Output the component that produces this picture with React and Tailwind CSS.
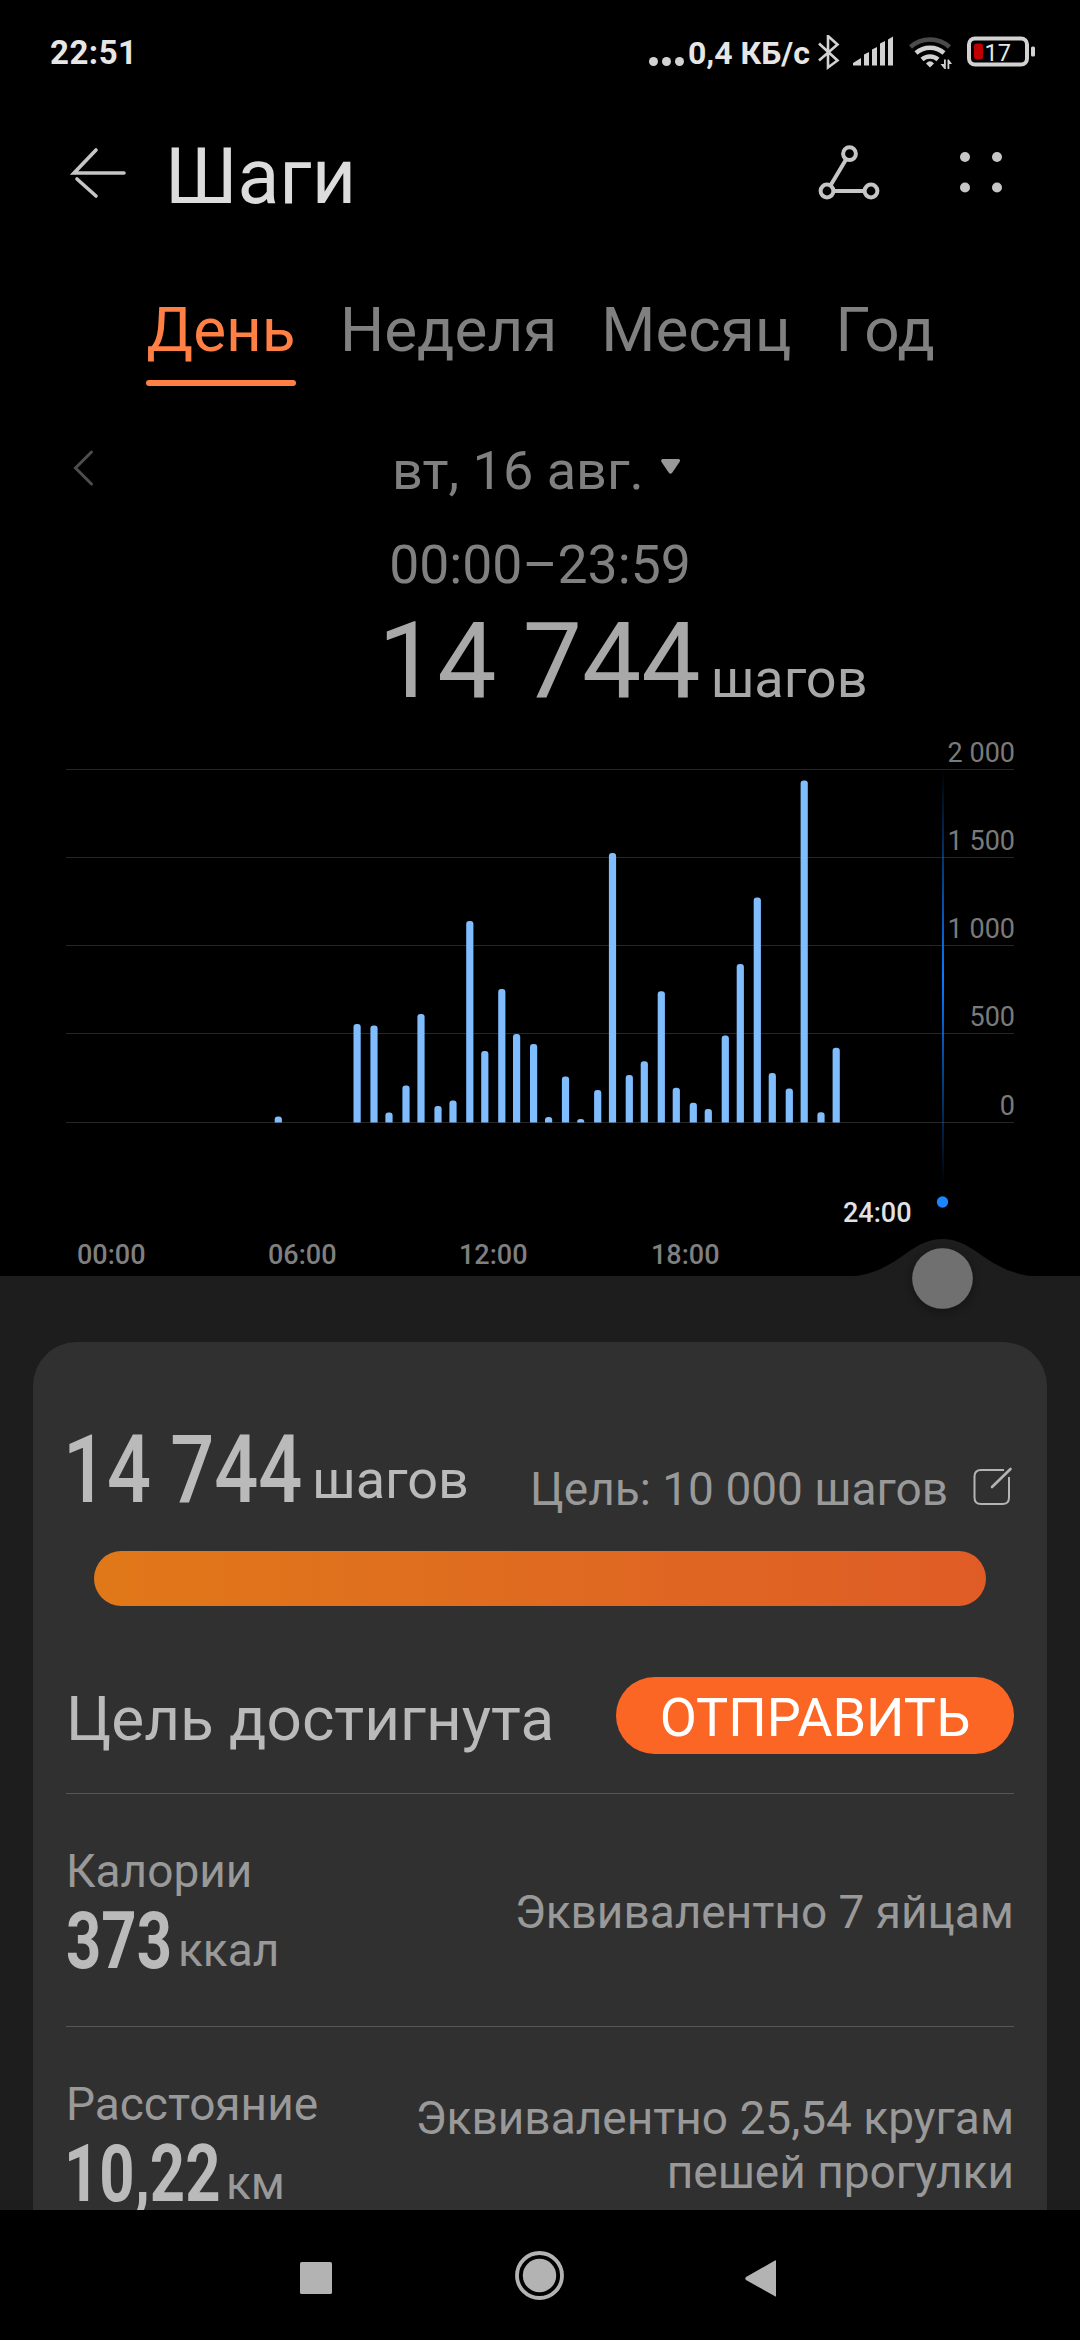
import { useState } from 'react'

const TABS = ['День', 'Неделя', 'Месяц', 'Год']

// x = bar center, y = bar top
const BARS = [
  [278.3, 1116.4], [357.1, 1024], [374, 1025.4], [389, 1112.5], [406, 1085.4], [421, 1014],
  [438, 1106], [453, 1100.4], [469.8, 921], [484.8, 1051], [501.8, 989], [516.6, 1034],
  [533.6, 1044], [548.6, 1117], [565.5, 1076.4], [580.7, 1119], [597.7, 1090], [612.5, 853],
  [629.3, 1075], [644.3, 1061.2], [661.3, 991.3], [676.3, 1087.7], [693.3, 1102.8], [708.3, 1109],
  [725.3, 1035.5], [740.3, 964], [757.3, 897.5], [772.3, 1073], [789.3, 1088.5], [804.2, 780.5],
  [821, 1112.2], [836.2, 1047.8],
]

const GRID = [
  { y: 769, label: '2 000' },
  { y: 857, label: '1 500' },
  { y: 945, label: '1 000' },
  { y: 1033, label: '500' },
  { y: 1122, label: '0' },
]

const HOURS = [
  { x: 77, label: '00:00' },
  { x: 268, label: '06:00' },
  { x: 459, label: '12:00' },
  { x: 651, label: '18:00' },
]

function StatusBar() {
  return (
    <div className="h-[105px] flex items-center justify-between pl-[50px] pr-[42px]">
      <span className="text-[33px] leading-[40px] tracking-[0.5px] font-bold text-[#e6e6e6]">22:51</span>
      <div className="flex items-center">
        <svg className="w-[40px] h-[36px]" viewBox="648 34 40 36" fill="#d2d2d2">
          <circle cx="653.5" cy="60.5" r="4.5" />
          <circle cx="666.5" cy="60.5" r="4.5" />
          <circle cx="679.5" cy="60.5" r="4.5" />
        </svg>
        <span className="w-[127px] text-[32px] leading-[40px] font-bold text-[#e6e6e6] whitespace-nowrap">
          0,4 КБ/с
        </span>
        {/* bluetooth */}
        <svg className="w-[32px] h-[36px]" viewBox="815 34.5 32 36" fill="none" stroke="#d2d2d2" strokeWidth="2.6">
          <path d="M819 43L837.5 60L828 67V35.5L837.5 44L819 60" />
        </svg>
        {/* signal */}
        <svg className="w-[55px] h-[36px]" viewBox="847 34.5 55 36" fill="#d2d2d2">
          <path d="M853 65V62.5L861 57.5V65ZM864 65V54L869 51.5V65ZM872 65V49L877 46.5V65ZM880 65V43L885 40.5V65ZM888 65V39L893 36V65Z" />
        </svg>
        {/* wifi */}
        <svg className="w-[60px] h-[36px]" viewBox="902 34.5 60 36" fill="none" strokeWidth="4.5">
          <path d="M910.5 46.5A29 29 0 0 1 949.5 46.5" stroke="#4a4a4a" />
          <path d="M916 52.5A21 21 0 0 1 944 52.5" stroke="#d2d2d2" />
          <path d="M922 59A12 12 0 0 1 938 59" stroke="#d2d2d2" />
          <path d="M926 63Q930 58.5 934 63L930 67Z" fill="#d2d2d2" stroke="none" />
          <path d="M944 59H945.8V68.5H944.5L940.5 63.5H944ZM947.5 68.5V59H948.8L952 63.5H949.3V68.5Z" fill="#d2d2d2" stroke="none" />
        </svg>
        <svg className="w-[76px] h-[36px]" viewBox="962 34.5 76 36">
          <rect x="969" y="38" width="58" height="26" rx="6" fill="none" stroke="#d2d2d2" strokeWidth="4" />
          <rect x="1031" y="46" width="4" height="10" rx="1.5" fill="#d2d2d2" />
          <rect x="974" y="43" width="9" height="16" rx="3" fill="#c00000" />
          <text x="984.5" y="60" fontSize="23.5" fill="#e6e6e6">17</text>
        </svg>
      </div>
    </div>
  )
}

function Header() {
  return (
    <div className="h-[144px] flex items-center pl-[66px]">
      <svg
        className="w-[66px] h-[72px]"
        viewBox="66 141 66 72"
        fill="none"
        stroke="#c6c6c6"
        strokeWidth="3.6"
        strokeLinecap="round"
      >
        <path d="M124 173H74L96 150M77 179L96 196" />
      </svg>
      <h1 className="ml-[33px] text-[77px] leading-[90px] text-[#dcdcdc]">Шаги</h1>
      <svg className="ml-auto w-[70px] h-[72px]" viewBox="815 141 70 72" fill="none" stroke="#c6c6c6" strokeWidth="4">
        <circle cx="849.5" cy="153.7" r="6.4" />
        <circle cx="827" cy="191" r="6.4" />
        <circle cx="871" cy="191" r="6.4" />
        <path d="M846 159.5L830.5 185.5M833.5 191H864.5" />
      </svg>
      <svg className="ml-[60px] mr-[65px] w-[70px] h-[72px]" viewBox="945 141 70 72" fill="#c6c6c6">
        <circle cx="965" cy="157" r="5" />
        <circle cx="997" cy="157" r="5" />
        <circle cx="965" cy="187.5" r="5" />
        <circle cx="997" cy="187.5" r="5" />
      </svg>
    </div>
  )
}

function Chart() {
  return (
    <svg className="relative z-10 block w-[1080px] h-[555px] overflow-visible" viewBox="0 721 1080 555">
      <defs>
        <linearGradient id="cursor" x1="0" y1="0" x2="0" y2="1">
          <stop offset="0" stopColor="#0a7aff" stopOpacity="0" />
          <stop offset="0.5" stopColor="#0a7aff" />
          <stop offset="1" stopColor="#0a7aff" stopOpacity="0" />
        </linearGradient>
        <filter id="knobShadow" x="-50%" y="-50%" width="200%" height="200%">
          <feDropShadow dx="0" dy="3" stdDeviation="6" floodColor="#000" floodOpacity="0.35" />
        </filter>
      </defs>

      {GRID.map((g) => (
        <g key={g.label}>
          <rect x="66" y={g.y} width="948" height="1" fill="#262626" />
          <text x="1015" y={g.y - 7.5} textAnchor="end" fontSize="27" fill="#7a7a7a">
            {g.label}
          </text>
        </g>
      ))}

      {BARS.map(([x, y]) => (
        <path
          key={x}
          d={`M${x - 3.6} 1122.5V${Math.min(y + 3, 1122)}q0 -3 3 -3h1.2q3 0 3 3V1122.5Z`}
          fill="#7fbdff"
        />
      ))}

      {HOURS.map((h) => (
        <text key={h.label} x={h.x} y="1264" fontSize="27" fontWeight="500" fill="#7f7f7f">
          {h.label}
        </text>
      ))}
      <text x="843" y="1222" fontSize="27" fontWeight="500" fill="#e2e2e2">
        24:00
      </text>

      <rect x="942" y="769" width="2" height="417" fill="url(#cursor)" />
      <circle cx="942.5" cy="1202" r="5.7" fill="#1c86ff" />

      {/* slider bump and knob */}
      <path d="M845 1277C898 1275 908 1239 942.5 1239S987 1275 1042 1277Z" fill="#1d1d1d" />
      <circle cx="942.5" cy="1278.5" r="30.3" fill="#707070" filter="url(#knobShadow)" />
    </svg>
  )
}

function Metric({ title, value, valueClass, unit, children }) {
  return (
    <div className="h-[233px] flex justify-between border-b border-[#565656]">
      <div className="pt-[49px]">
        <p className="text-[46px] leading-[56px] text-[#999]">{title}</p>
        <div className="flex items-start mt-[2px]">
          <span className={valueClass}>
            <span className="inline-block origin-left scale-x-[0.77]">{value}</span>
          </span>
          <span className="mt-[21px] text-[46px] leading-[56px] text-[#999]">{unit}</span>
        </div>
      </div>
      <p className="self-center pt-[3px] text-right text-[46px] leading-[54px] text-[#999]">{children}</p>
    </div>
  )
}

function Summary() {
  return (
    <div className="h-[934px] overflow-hidden bg-[#1d1d1d] pt-[66px] px-[33px]">
      <div className="rounded-t-[44px] bg-[#303030] px-[33px]">
        <div className="h-[209px] flex items-start">
          <span className="mt-[80px] -ml-[3px] w-[249px] text-[95px] leading-[96px] font-medium text-[#bababa] whitespace-nowrap">
            <span className="inline-block origin-left scale-x-[0.815]">14 744</span>
          </span>
          <span className="mt-[106px] text-[54px] leading-[64px] text-[#bababa]">шагов</span>
          <span className="mt-[119px] ml-auto text-[46px] leading-[56px] text-[#999]">Цель: 10 000 шагов</span>
          <svg
            className="mt-[122px] ml-[22px] w-[44px] h-[44px]"
            viewBox="970 1464 44 44"
            fill="none"
            stroke="#b4b4b4"
            strokeWidth="2"
          >
            <path d="M1004 1470H981Q974.5 1470 974.5 1476.5V1497.5Q974.5 1504 981 1504H1002.5Q1009 1504 1009 1497.5V1477" />
            <path d="M992 1487L1010.5 1469" strokeWidth="2.6" strokeLinecap="round" />
          </svg>
        </div>

        <div className="mx-[28px] h-[55px] rounded-full bg-linear-to-r from-[#e07818] to-[#df5c26]" />

        <div className="h-[188px] flex items-start justify-between border-b border-[#565656]">
          <span className="mt-[77px] text-[62px] leading-[72px] text-[#bababa]">Цель достигнута</span>
          <button className="mt-[71px] w-[398px] h-[77px] rounded-full bg-[#fc6625] pt-[5px] text-[54px] leading-[72px] text-white">
            ОТПРАВИТЬ
          </button>
        </div>

        <Metric
          title="Калории"
          value="373"
          unit="ккал"
          valueClass="w-[112px] text-[80px] leading-[80px] font-bold text-[#bababa] whitespace-nowrap"
        >
          Эквивалентно 7 яйцам
        </Metric>
        <Metric
          title="Расстояние"
          value="10,22"
          unit="км"
          valueClass="-ml-[2px] w-[162px] text-[80px] leading-[80px] font-bold text-[#bababa] whitespace-nowrap"
        >
          Эквивалентно 25,54 кругам
          <br />
          пешей прогулки
        </Metric>
      </div>
    </div>
  )
}

function NavBar() {
  return (
    <div className="h-[130px] flex items-center bg-black pl-[290px]">
      <svg className="w-[52px] h-[60px]" viewBox="290 2245 52 60" fill="#b3b3b3">
        <rect x="300" y="2262" width="32" height="32" rx="1.5" />
      </svg>
      <svg className="ml-[168px] w-[60px] h-[60px]" viewBox="510 2245 60 60">
        <circle cx="539.5" cy="2275.5" r="22.5" fill="none" stroke="#b3b3b3" strokeWidth="3.8" />
        <circle cx="539.5" cy="2275.5" r="16.7" fill="#b3b3b3" />
      </svg>
      <svg className="ml-[165px] w-[52px] h-[60px]" viewBox="735 2245 52 60" fill="#b3b3b3">
        <path d="M776 2261V2296Q776 2297 775 2296.3L746 2280Q744.5 2278.5 746 2277L775 2260.5Q776 2260 776 2261Z" />
      </svg>
    </div>
  )
}

function App() {
  const [tab, setTab] = useState('День')

  return (
    <div className="w-[1080px] h-[2340px] overflow-hidden bg-black font-['Roboto',sans-serif]">
      <StatusBar />
      <Header />

      <div className="flex items-start h-[137px] gap-[44px] pt-[31px] pl-[146px]">
        {TABS.map((name) => (
          <button
            key={name}
            onClick={() => setTab(name)}
            className={name === tab ? 'min-w-[150px] text-[#ff7f44]' : 'text-[#808080]'}
          >
            <span className="block text-[62px] leading-[100px]">{name}</span>
            {name === tab && <span className="block h-[6px] rounded-full bg-[#ff7f44]" />}
          </button>
        ))}
      </div>

      <div className="mt-[50px] h-[70px] flex items-center">
        <svg
          className="ml-[70px] w-[30px] h-[50px]"
          viewBox="70 446 30 50"
          fill="none"
          stroke="#4d4d4d"
          strokeWidth="3"
          strokeLinecap="round"
        >
          <path d="M91.5 452L75.5 468L91.5 484" />
        </svg>
        <span className="ml-[292px] w-[266px] text-[54px] leading-[70px] text-[#808080] whitespace-nowrap">
          вт, 16 авг.
        </span>
        <svg className="w-[24px] h-[30px]" viewBox="658 456 24 30" fill="#999">
          <path d="M662.5 459H678.5Q681 459.5 679.5 462L672 473Q670.5 474.5 669 473L661.5 462Q660.5 459.5 662.5 459Z" />
        </svg>
      </div>

      <p className="mt-[24px] h-[70px] text-center text-[53.5px] leading-[70px] text-[#808080]">00:00–23:59</p>

      <div className="h-[121px] flex items-baseline pl-[378px] text-[#a8a8a8]">
        <span className="text-[105.5px] leading-[122px]">14 744</span>
        <span className="ml-[10px] text-[54px] leading-[64px]">шагов</span>
      </div>

      <Chart />
      <Summary />
      <NavBar />
    </div>
  )
}

export default App
